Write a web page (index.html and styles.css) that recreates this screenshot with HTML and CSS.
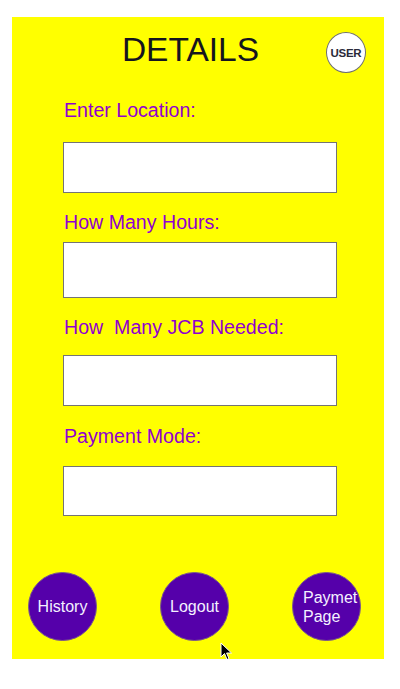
FILE: index.html
```html
<!DOCTYPE html>
<html>
<head>
<meta charset="utf-8">
<link rel="stylesheet" href="styles.css">
</head>
<body>
<div class="panel">
  <div class="header">
    <h1 class="title">DETAILS</h1>
    <div class="user">USER</div>
  </div>
  <form class="form">
    <label class="label l1">Enter Location:</label>
    <input class="field f1" type="text">
    <label class="label l2">How Many Hours:</label>
    <input class="field f2" type="text">
    <label class="label l3">How&nbsp; Many JCB Needed:</label>
    <input class="field f3" type="text">
    <label class="label l4">Payment Mode:</label>
    <input class="field f4" type="text">
  </form>
  <div class="actions">
    <button class="circle">History</button>
    <button class="circle">Logout</button>
    <button class="circle left">Paymet<br>Page</button>
  </div>
  <svg class="cursor" width="13" height="20" viewBox="0 0 13 20"><path d="M1 1 L1 15 L4.5 11.5 L7 17.5 L9 16.6 L6.6 11 L11.5 11 Z" fill="#000" stroke="#fff" stroke-width="1"/></svg>
</div>
</body>
</html>
```
FILE: styles.css
```css
html, body {
  margin: 0;
  padding: 0;
  background: #ffffff;
}
body {
  font-family: "Liberation Sans", Arial, sans-serif;
}
.panel {
  position: relative;
  box-sizing: border-box;
  width: 372px;
  height: 642px;
  margin: 17px 16px 0 12px;
  padding-top: 14px;
  background: #ffff00;
}
.header {
  display: flex;
  align-items: flex-start;
  padding-left: 43px;
  padding-right: 18px;
}
.title {
  flex: 1;
  margin: 0;
  text-align: center;
  font-size: 33.5px;
  line-height: 38px;
  font-weight: normal;
  color: #15151f;
}
.user {
  box-sizing: border-box;
  width: 40px;
  height: 41px;
  margin-top: 1px;
  border: 1.5px solid #6f6f6f;
  border-radius: 50%;
  background: #ffffff;
  display: flex;
  align-items: center;
  justify-content: center;
  font-size: 11.5px;
  font-weight: bold;
  letter-spacing: -0.3px;
  color: #2a2a3a;
}
.form {
  display: flex;
  flex-direction: column;
  align-items: flex-start;
  padding-left: 51px;
  margin: 0;
}
.label {
  font-size: 19.6px;
  line-height: 23px;
  color: #9000d0;
  padding-left: 1px;
}
.l1 { margin-top: 26px; }
.l2 { margin-top: 18px; }
.l3 { margin-top: 18px; }
.l4 { margin-top: 19px; }
.field {
  box-sizing: border-box;
  width: 274px;
  margin: 0;
  padding: 0;
  border: 1px solid #747474;
  background: #ffffff;
  outline: none;
}
.f1 { margin-top: 20px; height: 51px; }
.f2 { margin-top: 8px; height: 56px; }
.f3 { margin-top: 16px; height: 51px; }
.f4 { margin-top: 18px; height: 50px; }
.actions {
  display: flex;
  gap: 63px;
  padding-left: 16px;
  margin-top: 56px;
}
.circle {
  box-sizing: border-box;
  width: 69px;
  height: 69px;
  margin: 0;
  padding: 0;
  border: 1.5px solid #7a5a8a;
  border-radius: 50%;
  background: #5500aa;
  color: #f4f0ff;
  font-family: "Liberation Sans", Arial, sans-serif;
  font-size: 16px;
  line-height: 19px;
  text-align: center;
}
.circle.left {
  text-align: left;
  padding-left: 10px;
  padding-right: 0;
  white-space: nowrap;
}
.cursor {
  position: absolute;
  left: 208px;
  top: 625px;
}
```
